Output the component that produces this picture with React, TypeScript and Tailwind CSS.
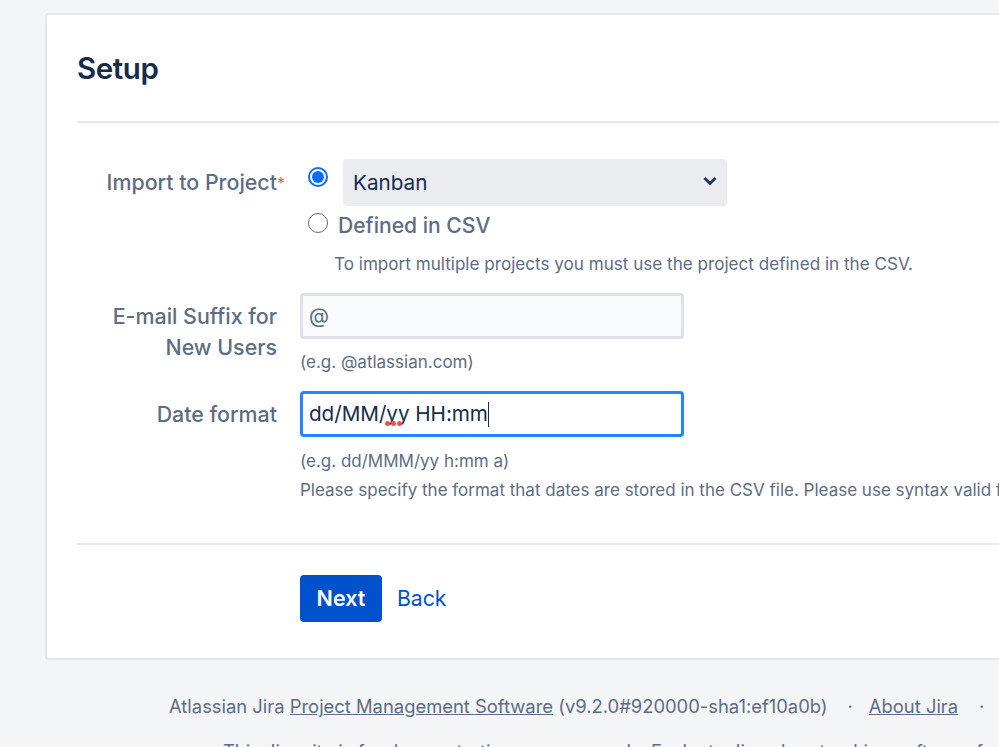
const font = { fontFamily: 'Inter, "Liberation Sans", sans-serif' };

export default function App() {
  return (
    <div style={font} className="h-[747px] w-[999px] overflow-hidden bg-[#f4f5f7] pl-[45px] pt-[13px] text-[#5e6c84]">
      <div className="h-[647px] w-[1100px] rounded-[4px] border-2 border-[#e4e6ea] bg-white pl-[30px]">
        <h1 className="pt-[33px] text-[29.5px] leading-[40px] font-semibold tracking-[-0.4px] text-[#172b4d]">Setup</h1>
        <div className="mt-[33px] h-[2px] bg-[#e6e7ea]" />

        <div className="mt-[36px] flex">
          <div className="w-[208px] shrink-0 whitespace-nowrap pt-[7px] text-right text-[21.4px] leading-[32px] font-medium">
            Import to Project<span className="relative -top-[1px] text-[16px] font-normal text-[#e8604a]">*</span>
          </div>
          <div className="ml-[23px] flex-1">
            <div className="flex items-start">
              <span className="mt-[8px] box-border flex h-[20px] w-[20px] items-center justify-center rounded-full border-2 border-[#0a6cff] bg-white">
                <span className="h-[12px] w-[12px] rounded-full bg-[#0a6cff]" />
              </span>
              <div className="ml-[15px] flex h-[47px] w-[384px] items-center justify-between rounded-[4px] bg-[#ebecf0] pl-[10px] pr-[10px] pt-[1px] text-[20.7px] text-[#172b4d]">
                <span>Kanban</span>
                <svg width="14" height="10" viewBox="0 0 14 10" className="-mt-[4px]" fill="none">
                  <path d="M1.5 2 7 7.5 12.5 2" stroke="#253858" strokeWidth="3" />
                </svg>
              </div>
            </div>
            <div className="mt-[5px] flex items-start">
              <span className="mt-[2px] box-border h-[20px] w-[20px] rounded-full border-[1.5px] border-[#6b6b6b] bg-white" />
              <span className="ml-[10px] text-[21.1px] leading-[30px] font-medium">Defined in CSV</span>
            </div>
            <p className="ml-[26px] mt-[11px] whitespace-nowrap text-[17.1px] leading-[24px]">
              To import multiple projects you must use the project defined in the CSV.
            </p>
          </div>
        </div>

        <div className="mt-[17px] flex">
          <div className="w-[200px] shrink-0 whitespace-nowrap pt-[8px] text-right text-[21.4px] leading-[31px] font-medium">
            E-mail Suffix for
            <br />
            New Users
          </div>
          <div className="ml-[23px]">
            <div className="box-border flex h-[46px] w-[384px] items-center rounded-[4px] border-[3px] border-[#dfe1e6] bg-[#fafbfc] pl-[6px] text-[20.7px]">@</div>
            <p className="mt-[11px] whitespace-nowrap text-[17px] leading-[24px]">(e.g. @atlassian.com)</p>
          </div>
        </div>

        <div className="mt-[17px] flex">
          <div className="w-[200px] shrink-0 whitespace-nowrap pt-[8px] text-right text-[21.4px] leading-[31px] font-medium">Date format</div>
          <div className="ml-[23px]">
            <div className="box-border flex h-[46px] w-[384px] items-center rounded-[4px] border-[3px] border-[#2684ff] bg-white pl-[6px] text-[20.7px] text-[#172b4d]">
              <span className="relative tracking-[-0.05px]">
                dd/MM/yy HH:mm
                <span className="absolute left-[76px] top-[23px] flex gap-[1px]">
                  <span className="h-[5px] w-[5px] rounded-full bg-[#ef5350]" />
                  <span className="h-[5px] w-[5px] rounded-full bg-[#ef5350]" />
                  <span className="h-[5px] w-[5px] rounded-full bg-[#ef5350]" />
                </span>
              </span>
              <span className="h-[25px] w-[1.5px] bg-[#172b4d]" />
            </div>
            <p className="mt-[12px] whitespace-nowrap text-[17px] leading-[24px]">(e.g. dd/MMM/yy h:mm a)</p>
            <p className="mt-[5px] whitespace-nowrap text-[17px] leading-[24px]">
              Please specify the format that dates are stored in the CSV file. Please use syntax valid for SimpleDateFormat.
            </p>
          </div>
        </div>

        <div className="mt-[41px] h-[2px] bg-[#e6e7ea]" />
        <div className="ml-[223px] mt-[30px] flex items-center">
          <button className="h-[47px] w-[82px] rounded-[4px] bg-[#0052cc] text-[21.5px] font-semibold text-white">Next</button>
          <a className="ml-[15px] text-[21.2px] text-[#0052cc]">Back</a>
        </div>
      </div>

      <div className="ml-[124px] mt-[32px] whitespace-nowrap text-[18.4px] leading-[28px]">
        Atlassian Jira <span className="underline">Project Management Software</span> (v9.2.0#920000-sha1:ef10a0b)
        <span className="ml-[20px] mr-[16px]">·</span>
        <span className="underline">About Jira</span>
        <span className="ml-[21px]">·</span>
      </div>
      <div className="ml-[178px] mt-[17px] whitespace-nowrap text-[18.4px] leading-[28px]">
        This Jira site is for demonstration purposes only. Evaluate Jira - bug tracking software for your team.
      </div>
    </div>
  );
}
